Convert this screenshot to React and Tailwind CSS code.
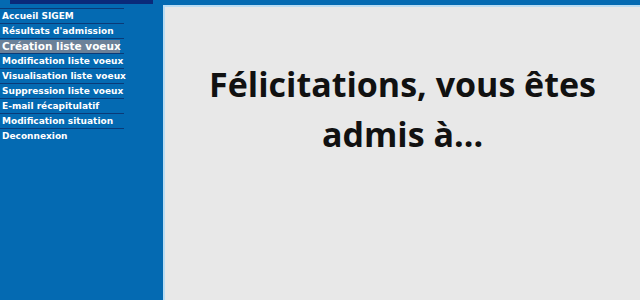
import React from 'react';

const items = [
  'Accueil SIGEM',
  "Résultats d'admission",
  'Création liste voeux',
  'Modification liste voeux',
  'Visualisation liste voeux',
  'Suppression liste voeux',
  'E-mail récapitulatif',
  'Modification situation',
  'Deconnexion',
];

const App = () => {
  return (
    <div className="w-[640px] h-[300px] bg-[#046ab2] flex overflow-hidden">
      <div className="w-[163px] shrink-0 flex flex-col">
        <div className="h-[4px] ml-[10px] w-[143px] bg-[#0a2a7a]" />
        <ul className="mt-[4px] w-[124px]" style={{ fontFamily: '"DejaVu Sans", Verdana, sans-serif' }}>
          {items.map((item, i) => (
            <li key={item} className="border-t border-[#0b3a78] h-[15px] flex items-center">
              {i === 2 ? (
                <span className="bg-[#6c8198] text-white font-bold text-[10.5px] leading-[13px] px-[2px] w-[120px] whitespace-nowrap">
                  {item}
                </span>
              ) : (
                <span className="text-white font-bold text-[9px] leading-[12px] pl-[2px] whitespace-nowrap">
                  {item}
                </span>
              )}
            </li>
          ))}
        </ul>
      </div>
      <div className="flex-1 mt-[5px] border-l-2 border-t-2 border-[#b9dcf3] bg-[#e8e8e8] flex justify-center">
        <h1
          className="mt-[52px] text-center text-[34px] leading-[50px] font-bold text-[#111]"
          style={{ fontFamily: '"Open Sans", sans-serif' }}
        >
          Félicitations, vous êtes
          <br />
          admis à...
        </h1>
      </div>
    </div>
  );
};

export default App;
